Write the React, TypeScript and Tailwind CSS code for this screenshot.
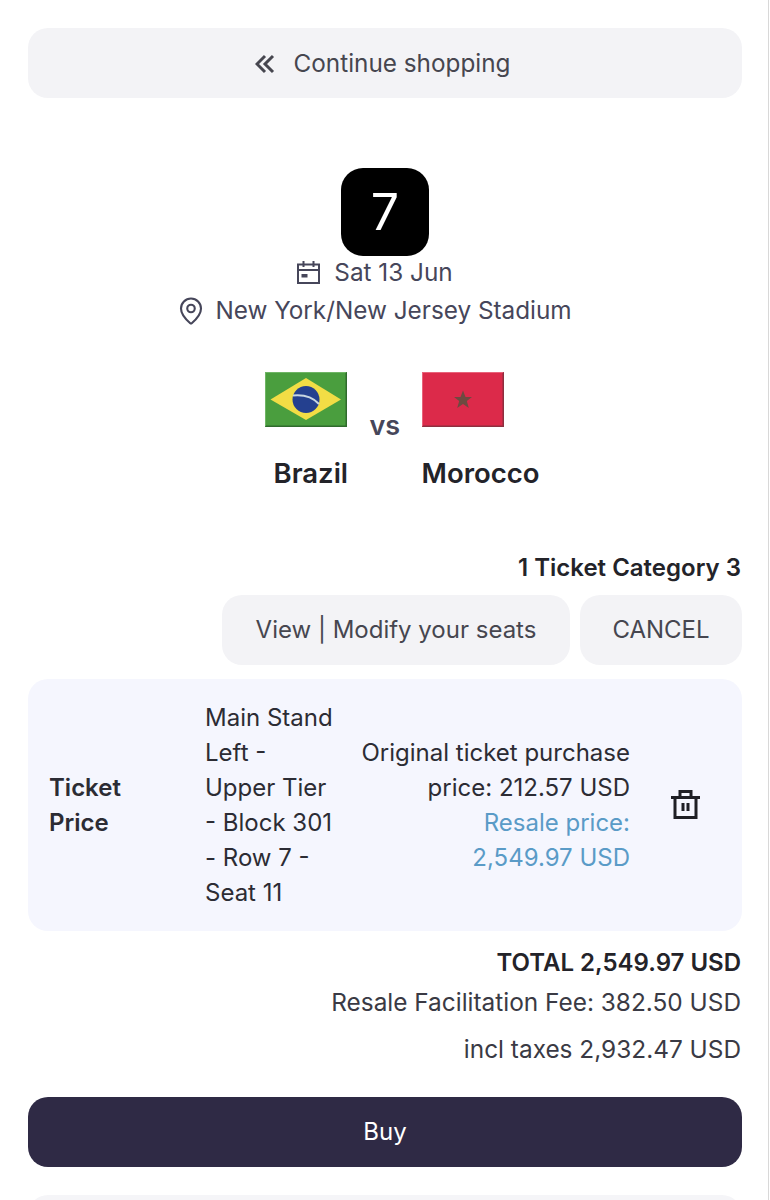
import { MapPin } from "lucide-react";

function BrazilFlag() {
  return (
    <svg viewBox="0 0 82 55" className="w-[82px] h-[55px]">
      <rect width="82" height="55" fill="#4a9e3e" />
      <path d="M0 0H82L81 1H1V54L0 55Z" fill="#6fb565" />
      <path d="M82 0V55H0L1 53.500H80.500V1Z" fill="#2f6b2c" />
      <path d="M5.500 27.500L41 6 76 27.500 41 48Z" fill="#f2dd45" />
      <circle cx="41" cy="27.500" r="13.500" fill="#24408f" />
      <path d="M28 23.500C38 22.500 48 25.500 54 32" stroke="#c8d6e2" strokeWidth="2" fill="none" />
    </svg>
  );
}

function MoroccoFlag() {
  return (
    <svg viewBox="0 0 82 55" className="w-[82px] h-[55px]">
      <rect width="82" height="55" fill="#dc2a4a" />
      <path d="M0 0H82L81 1H1V54L0 55Z" fill="#e8637a" />
      <path d="M82 0V55H0L1 53.500H80.500V1Z" fill="#8e2f3f" />
      <path
        d="M41 18.500L43.500 25H50L44.800 29L46.800 36L41 32L35.200 36L37.200 29L32 25H38.500Z"
        fill="#6e4a40"
      />
    </svg>
  );
}

function ChevronsIcon() {
  return (
    <svg viewBox="0 0 20 20" className="size-[20px]" fill="none" stroke="currentColor" strokeWidth="3">
      <path d="M10 2 2 10 10 18M18 2 10 10 18 18" />
    </svg>
  );
}

function CalendarIcon() {
  return (
    <svg viewBox="0 0 23 23" className="size-[23px]" fill="none" stroke="currentColor" strokeWidth="2">
      <path d="M1 3.500H22V22H1ZM1 9H22M6.500 0V6M16.500 0V6" />
      <rect x="4.500" y="13" width="6" height="3.500" fill="currentColor" stroke="none" />
    </svg>
  );
}

function TrashIcon() {
  return (
    <svg viewBox="0 0 29 29" className="size-[29px] text-[#1f1f25]" fill="none" stroke="currentColor" strokeWidth="3">
      <path d="M0 7.500H29M9 7.500V1.500H20V7.500M4 7.500V27.500H25V7.500" />
      <path d="M12 13V21M17 13V21" />
    </svg>
  );
}

export default function App() {
  return (
    <div className="relative h-[1200px] overflow-hidden bg-white px-[28px] pt-[28px] font-['Inter',sans-serif] text-[24px] text-[#46465a]">
      <button className="flex h-[70px] w-full items-center justify-center gap-[19px] rounded-[20px] bg-[#f3f3f6] pt-[1px] pr-[5px] text-[24.300px] text-[#46464f]">
        <ChevronsIcon />
        Continue shopping
      </button>

      <div className="mt-[70px] flex flex-col items-center">
        <div className="flex size-[88px] items-center justify-center rounded-[22px] bg-black text-[50px] text-white">
          7
        </div>
        <div className="flex h-[33px] items-center gap-[14px] pr-[20px] text-[24.300px]">
          <CalendarIcon />
          Sat 13 Jun
        </div>
        <div className="mt-[3px] flex h-[37px] items-center gap-[9px] pr-[22px] text-[24.300px]">
          <MapPin className="size-[30px]" strokeWidth={1.700} />
          New York/New Jersey Stadium
        </div>

        <div className="mt-[43px] flex items-start pl-[34px]">
          <div className="flex w-[105px] flex-col items-start">
            <BrazilFlag />
            <span className="mt-[26px] ml-[9px] whitespace-nowrap text-[27.500px] font-semibold text-[#232329]">Brazil</span>
          </div>
          <div className="mt-[38px] w-[52px] text-[27px] leading-[32px] font-semibold">vs</div>
          <div className="flex flex-col items-start">
            <MoroccoFlag />
            <span className="mt-[26px] whitespace-nowrap text-[27.500px] font-semibold text-[#232329]">Morocco</span>
          </div>
        </div>
      </div>

      <div className="mt-[56px] pr-[1px] text-right font-semibold text-[#232329]">1 Ticket Category 3</div>

      <div className="mt-[9px] flex justify-end gap-[10px] text-[#46464f]">
        <button className="h-[70px] w-[348px] rounded-[20px] bg-[#f3f3f6]">View | Modify your seats</button>
        <button className="h-[70px] w-[162px] rounded-[20px] bg-[#f3f3f6]">CANCEL</button>
      </div>

      <div className="mt-[14px] flex h-[252px] items-center rounded-[20px] bg-[#f5f6fe] pl-[21px] leading-[35px] text-[#2c2c34]">
        <div className="w-[156px] font-semibold">
          Ticket
          <br />
          Price
        </div>
        <div className="w-[130px]">Main Stand Left - Upper Tier - Block 301 - Row 7 - Seat 11</div>
        <div className="w-[295px] text-right">
          <div>
            Original ticket purchase
            <br />
            price: 212.57 USD
          </div>
          <div className="text-[#5a9bc7]">
            Resale price:
            <br />
            2,549.97 USD
          </div>
        </div>
        <div className="mb-[2px] ml-[41px]">
          <TrashIcon />
        </div>
      </div>

      <div className="mt-[14px] flex flex-col items-end pr-[1px] text-[24.400px] text-[#3a3a44]">
        <div className="text-[24px] font-semibold text-[#232329]">TOTAL 2,549.97 USD</div>
        <div className="mt-[3px]">Resale Facilitation Fee: 382.50 USD</div>
        <div className="mt-[10px]">incl taxes 2,932.47 USD</div>
      </div>

      <button className="mt-[30px] h-[70px] w-full rounded-[20px] bg-[#2f2a45] text-white">Buy</button>

      <div className="mt-[28px] h-[70px] w-full rounded-[20px] bg-[#f5f5f8]" />
      <div className="absolute right-[1px] top-0 h-full w-px bg-[#d8d8d8]" />
    </div>
  );
}
